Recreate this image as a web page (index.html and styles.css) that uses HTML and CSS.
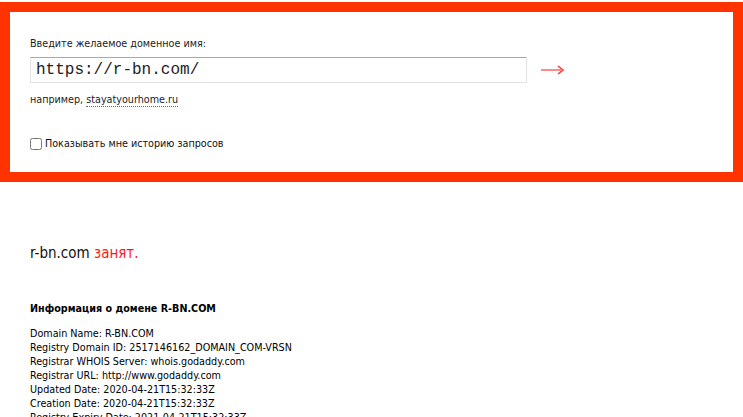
FILE: index.html
```html
<!DOCTYPE html>
<html lang="ru">
<head>
<meta charset="UTF-8" />
<title>Проверка домена</title>
<link rel="stylesheet" href="styles.css">
</head>
<body>
  <div class="search-box">
    <form class="search-form" onsubmit="return false">
      <label class="search-label" for="domain">Введите желаемое доменное имя:</label>
      <div class="search-row">
        <input type="text" id="domain" class="search-input" value="https://r-bn.com/">
        <button type="submit" class="search-go" title="Проверить">
          <svg width="24" height="12" viewBox="0 0 24 12">
            <line x1="0" y1="6" x2="20" y2="6" stroke="#ff8a8a" stroke-width="2"/>
            <path d="M17 2 L22 6 L17 10" fill="none" stroke="#ff3a3a" stroke-width="1.6"/>
          </svg>
        </button>
      </div>
      <div class="search-hint">например, <a href="#" class="hint-link">stayatyourhome.ru</a></div>
      <label class="history">
        <input type="checkbox" name="history"> Показывать мне историю запросов
      </label>
    </form>
  </div>

  <div class="result">
    <div class="result-title">r-bn.com <span class="busy">занят.</span></div>

    <div class="whois">
      <div class="whois-title">Информация о домене R-BN.COM</div>
      <div class="whois-lines">
        Domain Name: R-BN.COM<br>
        Registry Domain ID: 2517146162_DOMAIN_COM-VRSN<br>
        Registrar WHOIS Server: whois.godaddy.com<br>
        Registrar URL: http://www.godaddy.com<br>
        Updated Date: 2020-04-21T15:32:33Z<br>
        Creation Date: 2020-04-21T15:32:33Z<br>
        Registry Expiry Date: 2021-04-21T15:32:33Z<br>
        Registrar: GoDaddy.com, LLC<br>
      </div>
    </div>
  </div>
</body>
</html>
```

FILE: styles.css
```css
html, body {
  margin: 0;
  padding: 0;
  font-family: 'DejaVu Sans Condensed', 'DejaVu Sans', sans-serif;
  font-size: 10.7px;
  color: #000;
  background: #fff;
  overflow: hidden;
}
.search-box {
  margin-top: 2px;
  border: 10px solid #ff3300;
  padding: 25px 20px 20px;
  height: 115px;
}
.search-label {
  display: block;
  color: #222;
  margin-bottom: 7px;
}
.search-row {
  display: flex;
  align-items: center;
}
.search-input {
  width: 485px;
  height: 24px;
  padding: 0 5px;
  border: 1px solid #e0e0e8;
  border-top-color: #aaa;
  font-family: 'Liberation Mono', 'Courier New', monospace;
  font-size: 16px;
  color: #222;
  outline: none;
}
.search-go {
  display: flex;
  margin-left: 14px;
  background: none;
  border: none;
  padding: 0;
  cursor: pointer;
}
.search-hint {
  margin-top: 10px;
  color: #222;
}
.hint-link {
  color: #222;
  text-decoration: none;
  border-bottom: 1px dotted #666;
}
.history {
  display: flex;
  align-items: center;
  margin-top: 31px;
  color: #111;
}
.history input {
  margin: 0 3px 0 0;
  width: 12px;
  height: 12px;
}
.result {
  padding: 62px 30px 0;
}
.result-title {
  font-size: 15px;
  color: #111;
}
.busy {
  color: #ff1a1a;
}
.whois {
  margin-top: 40px;
}
.whois-title {
  font-weight: bold;
  margin-bottom: 12px;
}
.whois-lines {
  line-height: 14px;
}
```
